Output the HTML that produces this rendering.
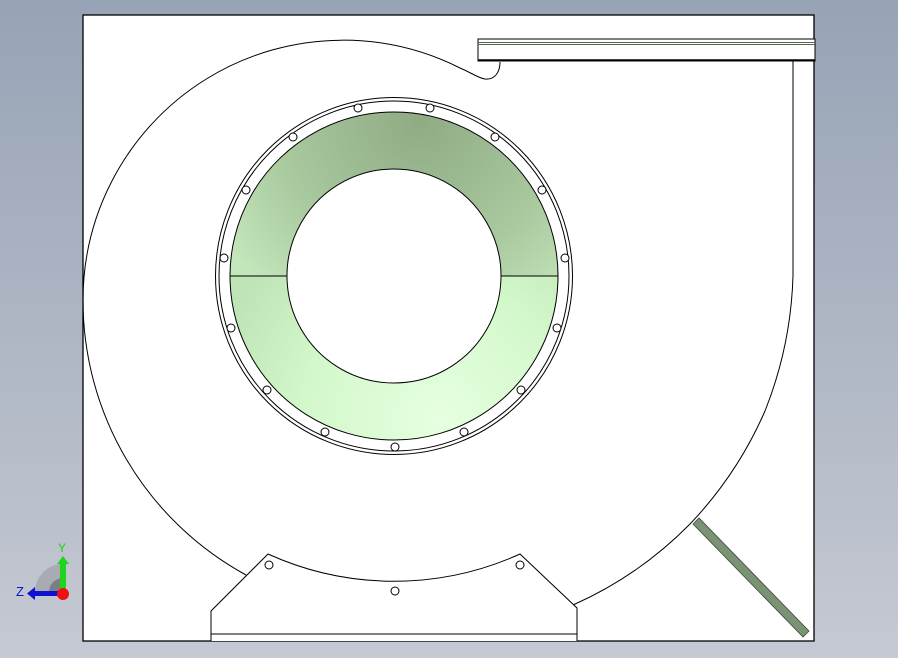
<!DOCTYPE html>
<html><head><style>
html,body{margin:0;padding:0;width:898px;height:658px;overflow:hidden;background:linear-gradient(#97a3b6,#c5c9d2);font-family:"Liberation Sans",sans-serif}
svg{position:absolute;left:0;top:0}
</style></head><body>
<svg width="898" height="658" viewBox="0 0 898 658">
<defs>
<radialGradient id="gt" gradientUnits="userSpaceOnUse" cx="420" cy="120" r="230">
<stop offset="0" stop-color="#8fab84"/><stop offset="0.6" stop-color="#a8c89e"/><stop offset="1" stop-color="#c4e6bb"/>
</radialGradient>
<radialGradient id="gb" gradientUnits="userSpaceOnUse" cx="440" cy="420" r="230">
<stop offset="0" stop-color="#e6ffe0"/><stop offset="0.6" stop-color="#d2f8ca"/><stop offset="1" stop-color="#bfe4b6"/>
</radialGradient>
<clipPath id="top"><rect x="0" y="0" width="898" height="276"/></clipPath>
<clipPath id="bot"><rect x="0" y="276" width="898" height="400"/></clipPath>
</defs>
<rect x="83" y="15" width="731" height="626" fill="#fff" stroke="#000" stroke-width="1.3"/>
<g fill="none" stroke="#000" stroke-width="1">
<path d="M500,62 C500,72 495,80 485,79 C478,78 470,72 460,68 A260 260 0 0 0 83,300 A313 313 0 0 0 246,575"/>
<path d="M573,605 A380 380 0 0 0 690,524 A390 390 0 0 0 765,411 A397 397 0 0 0 793,276 L793,61"/>
<path d="M211,641 L211,611 L268,554 A305 305 0 0 0 520,554 L577,608 L577,641" fill="#fff"/>
<line x1="211" y1="634" x2="577" y2="634"/>
<circle cx="269" cy="565" r="4"/><circle cx="520" cy="565" r="4"/><circle cx="395" cy="591" r="4"/>
<circle cx="394" cy="276" r="178.5"/>
<circle cx="394" cy="276" r="175"/>
</g>
<g fill="url(#gt)" clip-path="url(#top)"><path d="M394,112 a164 164 0 1 0 0.01 0 Z M394,169 a107 107 0 1 1 -0.01 0 Z" fill-rule="evenodd" stroke="#000"/></g>
<g fill="url(#gb)" clip-path="url(#bot)"><path d="M394,112 a164 164 0 1 0 0.01 0 Z M394,169 a107 107 0 1 1 -0.01 0 Z" fill-rule="evenodd" stroke="#000"/></g>
<line x1="230" y1="276" x2="287" y2="276" stroke="#000"/>
<line x1="501" y1="276" x2="558" y2="276" stroke="#000"/>
<g fill="#fff" stroke="#000" stroke-width="1">
<circle cx="358" cy="108" r="4"/><circle cx="430" cy="108" r="4"/><circle cx="495" cy="137" r="4"/><circle cx="542" cy="190" r="4"/>
<circle cx="565" cy="258" r="4"/><circle cx="557" cy="328" r="4"/><circle cx="521" cy="390" r="4"/><circle cx="464" cy="432" r="4"/>
<circle cx="395" cy="447" r="4"/><circle cx="325" cy="432" r="4"/><circle cx="267" cy="390" r="4"/><circle cx="231" cy="328" r="4"/>
<circle cx="224" cy="258" r="4"/><circle cx="246" cy="190" r="4"/><circle cx="293" cy="137" r="4"/>
</g>
<rect x="478" y="39" width="337" height="22" fill="#fff" stroke="#000"/>
<line x1="478" y1="42.5" x2="815" y2="42.5" stroke="#556650"/>
<line x1="478" y1="44.5" x2="815" y2="44.5" stroke="#556650"/>
<line x1="478" y1="60" x2="815" y2="60" stroke="#000" stroke-width="1.5"/>
<polygon points="693,524 699,518 809,631 803,637" fill="#7b9274" stroke="#3d4a3a" stroke-width="0.8"/>
<path d="M35,592 A28 28 0 0 1 63,564 L63,592 Z" fill="#a8abb2"/>
<path d="M49,592 A14 14 0 0 1 63,578 L63,592 Z" fill="#7b7e85"/>
<rect x="60" y="562" width="6" height="28" fill="#1fd31f"/>
<polygon points="57,564 63,556 69,564" fill="#1fd31f"/>
<rect x="33" y="591" width="28" height="5" fill="#1010d0"/>
<polygon points="35,587 27,593.5 35,600" fill="#1010d0"/>
<circle cx="63" cy="594" r="6" fill="#ee1111"/>
<text x="58" y="552" font-size="12" fill="#22cc22">Y</text>
<text x="16" y="596" font-size="13" fill="#1010d0">Z</text>
</svg>
</body></html>
